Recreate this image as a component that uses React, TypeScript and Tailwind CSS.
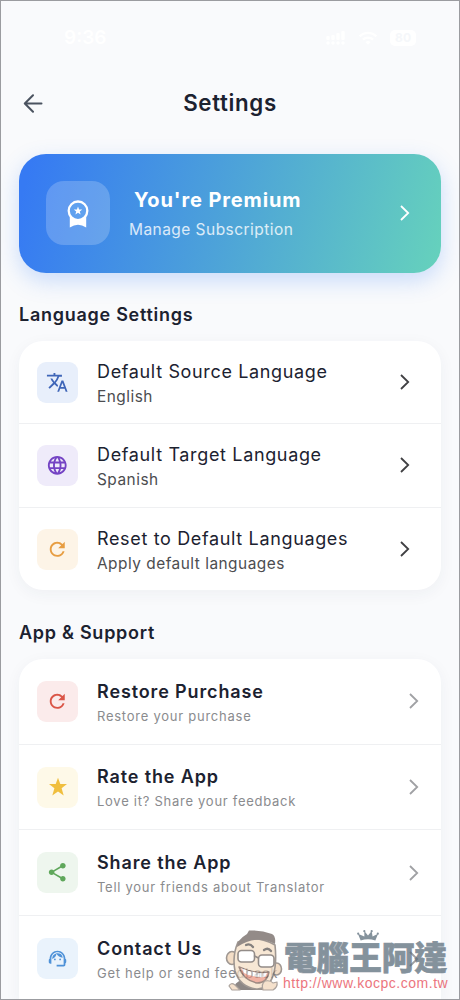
import type { ReactNode } from "react";
import {
  MdLanguage,
  MdRefresh,
  MdShare,
  MdSupportAgent,
  MdTranslate,
  MdWifi,
} from "react-icons/md";

function Chevron({ className }: { className: string }) {
  return (
    <svg viewBox="0 0 10 16" className={"h-4 w-2.5 shrink-0 " + className} fill="none" stroke="currentColor" strokeWidth="1.8">
      <path d="M1 1 L8.2 8 L1 15" />
    </svg>
  );
}

function Medal() {
  return (
    <svg viewBox="0 0 22 28" className="h-7 w-[22px]" fill="none">
      <path d="M2.8 15 H19.2 V27.6 Q15 24.7 11 24.7 Q7 24.7 2.8 27.6Z" fill="white" />
      <circle cx="11" cy="10.8" r="9.3" fill="#60a1ef" stroke="white" strokeWidth="2.3" />
      <path d="M11 6.6 L12.1 9.5 L15.2 9.6 L12.8 11.5 L13.6 14.5 L11 12.8 L8.4 14.5 L9.2 11.5 L6.8 9.6 L9.9 9.5Z" fill="white" />
    </svg>
  );
}

function Star() {
  return (
    <svg viewBox="0 0 20 20" className="h-5 w-5" fill="currentColor">
      <path d="M10 0.8 L12.3 7 H19 L13.6 11.2 L15.7 18.6 L10 14.5 L4.3 18.6 L6.4 11.2 L1 7 H7.7Z" />
    </svg>
  );
}

function IconTile({ className, children }: { className: string; children: ReactNode }) {
  return (
    <div className={"flex h-[41px] w-[41px] shrink-0 items-center justify-center rounded-[9px] text-[22.5px] " + className}>
      {children}
    </div>
  );
}

type Item = { title: string; note: string; tile: string; icon: ReactNode; noteClass: string };

const languageItems: Item[] = [
  { title: "Default Source Language", note: "English", tile: "bg-[#e8effb] text-[#3f66b8]", icon: <MdTranslate />, noteClass: "tracking-[0.5px]" },
  { title: "Default Target Language", note: "Spanish", tile: "bg-[#efebfa] text-[#7443c4]", icon: <MdLanguage />, noteClass: "tracking-[0.5px]" },
  { title: "Reset to Default Languages", note: "Apply default languages", tile: "bg-[#fdf4e7] text-[#e79d42]", icon: <MdRefresh />, noteClass: "tracking-[0.5px]" },
];

const supportItems: Item[] = [
  { title: "Restore Purchase", note: "Restore your purchase", tile: "bg-[#fbebeb] text-[#da5547]", icon: <MdRefresh />, noteClass: "tracking-[0.75px]" },
  { title: "Rate the App", note: "Love it? Share your feedback", tile: "bg-[#fef9e8] text-[#f0bf3f]", icon: <Star />, noteClass: "tracking-[0.73px]" },
  { title: "Share the App", note: "Tell your friends about Translator", tile: "bg-[#eef6ee] text-[#5fa75b]", icon: <MdShare />, noteClass: "tracking-[0.73px]" },
  { title: "Contact Us", note: "Get help or send feedback", tile: "bg-[#eaf3fc] text-[#4f92d8]", icon: <MdSupportAgent className="text-[21px]" />, noteClass: "tracking-[0.73px]" },
];

function StatusBar() {
  return (
    <div className="flex h-[74px] items-center justify-between pr-[43px] pl-[63px] text-white">
      <span className="text-[19px] font-semibold">9:36</span>
      <div className="flex items-center gap-3">
        <svg viewBox="0 0 20 14" className="h-3.5 w-5" fill="currentColor">
          <circle cx="2" cy="12" r="1.7" /><circle cx="7" cy="12" r="1.7" /><circle cx="12" cy="12" r="1.7" /><circle cx="17" cy="12" r="1.7" />
          <rect x="0.3" y="5" width="3.4" height="4" rx="1" /><rect x="5.3" y="4" width="3.4" height="5" rx="1" />
          <rect x="10.3" y="2" width="3.4" height="7" rx="1" /><rect x="15.3" y="0" width="3.4" height="9" rx="1" />
        </svg>
        <MdWifi className="text-[20px]" />
        <span className="rounded-[5px] bg-white px-[5px] text-[12px] leading-4 font-bold text-[#f5f7fa]">80</span>
      </div>
    </div>
  );
}

function Watermark() {
  return (
    <div className="absolute top-[921px] left-[219px] flex h-[76px] w-[232px]">
      <svg viewBox="0 0 75 76" className="h-[76px] w-[75px] shrink-0 opacity-70" strokeLinecap="round" strokeLinejoin="round">
        <path d="M14 68 Q13 61 22 58 L44 62 Q50 64 51 68Z" fill="#5d5552" />
        <path d="M12 68 L9 64 Q11 60 15 63 L20 68Z" fill="#f1d5b7" stroke="#8a7d74" strokeWidth="1.2" />
        <ellipse cx="12" cy="36" rx="5.5" ry="6.5" fill="#efd0ae" stroke="#776c65" strokeWidth="1.6" />
        <ellipse cx="56.5" cy="47" rx="5" ry="6" fill="#efd0ae" stroke="#776c65" strokeWidth="1.6" />
        <path d="M18 20 Q36 12 55 23 Q57 42 53 54 Q48 68 36 67 Q20 65 15 49 Q12 34 18 20Z" fill="#f4ddc2" stroke="#776c65" strokeWidth="1.6" />
        <path d="M17 25 Q17 18 27 12 L29 8.5 Q41 8 52 12 Q56 14 55 22 Q37 12 17 25Z" fill="#665b57" />
        <path d="M26 23 Q30 21 33 25 M44 28 Q48 25 51 29" fill="none" stroke="#514b48" strokeWidth="2.2" />
        <rect x="18" y="28.5" width="16.5" height="11.5" rx="3.5" fill="white" stroke="#665c57" strokeWidth="1.6" />
        <rect x="38.5" y="33" width="15.5" height="12" rx="3.5" fill="white" stroke="#665c57" strokeWidth="1.6" />
        <path d="M34.5 34 L38.5 36" stroke="#665c57" strokeWidth="1.6" />
        <path d="M19 45 Q33 52 49 50 Q47 61 37 61 Q23 58 19 45Z" fill="#ec927d" stroke="#77594d" strokeWidth="1.4" />
        <path d="M21 46 Q34 52 47 51 L45 55 Q33 56 24 51Z" fill="white" />
        <path d="M27 49 V52 M32 50 V54 M37 51 V55 M42 51 V55" stroke="#817a74" strokeWidth="0.8" />
        <path d="M43 68 Q41 62 45 59 Q51 58 53 61 L57 60 Q58 65 53 68Z" fill="#f1d5b7" stroke="#8a7d74" strokeWidth="1.2" />
      </svg>
      <div className="relative -ml-[10px] min-w-0 pt-[17px] opacity-75">
        <svg viewBox="0 0 24 12" className="absolute top-[8px] left-[71px] h-[11px] w-6" fill="#5c6e7c">
          <path d="M4 11.5 L1 4 L8 7 L8 1 L12 6 L16 1 L17 7 L23 4 L20 11.5 Q12 8.5 4 11.5Z" />
          <circle cx="1.3" cy="4" r="1.2" /><circle cx="8" cy="1.3" r="1.2" /><circle cx="16" cy="1.3" r="1.2" /><circle cx="22.7" cy="4" r="1.2" />
        </svg>
        <div className="-ml-px font-['Noto_Sans_CJK_TC',sans-serif] text-[32.6px] leading-[34px] font-black whitespace-nowrap text-[#5c6e7c] [-webkit-text-stroke:0.7px_#5c6e7c]">電腦王阿達</div>
        <div className="-ml-[2px] font-['Liberation_Sans',sans-serif] text-[14px] leading-5 tracking-[0.52px] whitespace-nowrap text-[#e64853]">http://www.kocpc.com.tw</div>
      </div>
    </div>
  );
}

export default function App() {
  return (
    <div className="relative h-[1000px] w-[460px] overflow-hidden border border-[#9b9ca0] bg-[#f9fafc] font-['Inter',sans-serif] text-[#1c2230]">
      <StatusBar />
      <header className="grid h-[58px] grid-cols-[64px_1fr_64px] items-center">
        <svg viewBox="0 0 20 20" className="ml-[22px] h-5 w-5 text-[#4b5360]" fill="none" stroke="currentColor" strokeWidth="2" strokeLinecap="round" strokeLinejoin="round">
          <path d="M18.5 9.5 H2 M10 1.3 L1.8 9.5 L10 17.7" />
        </svg>
        <h1 className="-mt-0.5 text-center text-[22.3px] font-semibold tracking-[0.65px]">Settings</h1>
      </header>

      <main className="px-[18px] pt-[21px]">
        <section className="flex h-[118.5px] items-center rounded-[27px] bg-[linear-gradient(105deg,#367af3_3%,#4b9fdb_45%,#65d0bd_98%)] pr-[31px] pl-[27px] text-white shadow-[0_8px_22px_rgba(59,130,246,0.25)]">
          <div className="flex h-16 w-16 shrink-0 items-center justify-center rounded-[18px] bg-white/20 pt-0.5">
            <Medal />
          </div>
          <div className="ml-[19px] flex-1 pt-[2px] whitespace-nowrap">
            <div className="pl-[5px] text-[20px] leading-7 font-bold tracking-[0.88px]">You&apos;re Premium</div>
            <div className="mt-1 text-[15.5px] leading-6 tracking-[0.45px] text-white/80">Manage Subscription</div>
          </div>
          <Chevron className="text-white" />
        </section>

        <h2 className="mt-[29.5px] h-[26px] text-[18px] leading-[26px] font-semibold tracking-[0.73px]">Language Settings</h2>
        <section className="mt-[13px] h-[249px] divide-y divide-[#eff0f2] rounded-[24px] bg-white shadow-[0_4px_16px_rgba(30,50,80,0.05)]">
          {languageItems.map((item) => (
            <div key={item.title} className="flex h-[83.3px] items-center pr-[31.5px] pl-[18px]">
              <IconTile className={item.tile}>{item.icon}</IconTile>
              <div className="ml-[19px] flex-1 pt-[2px] whitespace-nowrap">
                <div className="text-[18px] leading-[26px] tracking-[0.65px]">{item.title}</div>
                <div className={"text-[15.4px] leading-[23px] text-[#4c4d50] " + item.noteClass}>{item.note}</div>
              </div>
              <Chevron className="text-[#404043]" />
            </div>
          ))}
        </section>

        <h2 className="mt-[29.5px] h-[26px] text-[18px] leading-[26px] font-semibold tracking-[0.73px]">App &amp; Support</h2>
        <section className="mt-[13.5px] divide-y divide-[#eff0f2] rounded-t-[24px] bg-white shadow-[0_4px_16px_rgba(30,50,80,0.05)]">
          {supportItems.map((item) => (
            <div key={item.title} className="flex h-[85.7px] items-center pr-[22px] pl-[18px]">
              <IconTile className={item.tile}>{item.icon}</IconTile>
              <div className="ml-[19px] flex-1 pt-[2.5px] whitespace-nowrap">
                <div className="text-[18px] leading-[26px] font-semibold tracking-[0.87px]">{item.title}</div>
                <div className={"text-[13px] leading-[22px] text-[#8a8b8e] " + item.noteClass}>{item.note}</div>
              </div>
              <Chevron className="text-[#a0a1a4]" />
            </div>
          ))}
        </section>
      </main>
      <Watermark />
    </div>
  );
}
